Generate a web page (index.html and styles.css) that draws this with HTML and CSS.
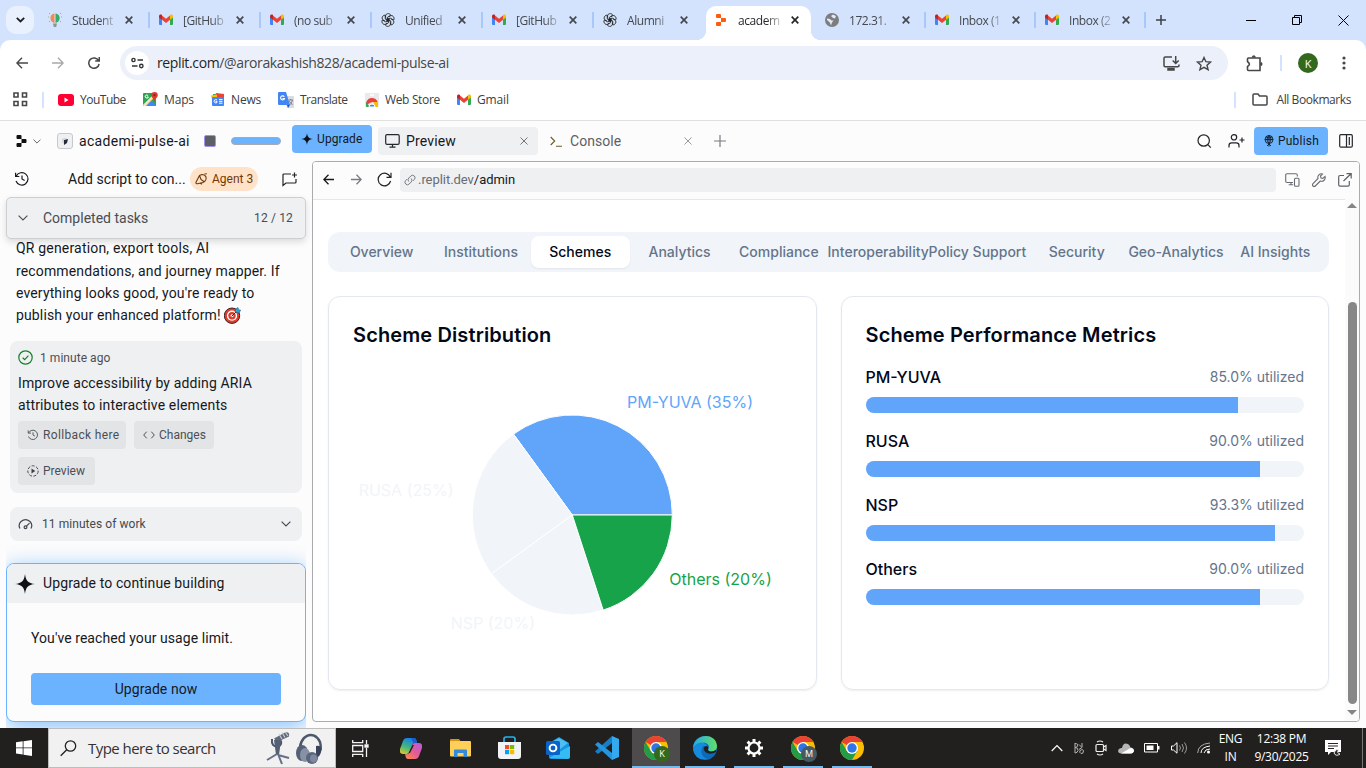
FILE: index.html
```html
<!DOCTYPE html>
<html lang="en">
<head>
<meta charset="utf-8">
<title>academi-pulse-ai - Replit</title>
<link rel="stylesheet" href="styles.css">
</head>
<body>
<svg class="sprite" aria-hidden="true">
  <symbol id="gmail" viewBox="0 0 14 12"><path d="M0 1.8V10a1 1 0 0 0 1 1h2V4.6z" fill="#4285f4"/><path d="M14 1.8V10a1 1 0 0 1-1 1h-2V4.6z" fill="#34a853"/><path d="M3 1.6l4 3.2 4-3.2v4.1L7 8.9 3 5.7z" fill="#ea4335"/><path d="M0 2.2C0 .5 1.8-.1 3 .9v4.8L0 3.5z" fill="#c5221f"/><path d="M14 2.2C14 .5 12.2-.1 11 .9v4.8l3-2.2z" fill="#fbbc04"/></symbol>
  <symbol id="x" viewBox="0 0 8 8"><path d="M.7.7l6.6 6.6M7.3.7L.7 7.3" fill="none" stroke="currentColor" stroke-width="1.7"/></symbol>
  <symbol id="knot" viewBox="0 0 14 14"><g fill="none" stroke="#222" stroke-width=".85"><path id="petal" d="M4.600 4.600V2.900C4.600.4 8.600-.4 9.800 2.200L6.600 4.100v3.700L4.700 6.700"/><use href="#petal" transform="rotate(60 7 7)"/><use href="#petal" transform="rotate(120 7 7)"/><use href="#petal" transform="rotate(180 7 7)"/><use href="#petal" transform="rotate(240 7 7)"/><use href="#petal" transform="rotate(300 7 7)"/></g></symbol>
  <symbol id="replit" viewBox="0 0 10 12"><path d="M0 1q0-1 1-1h3q1 0 1 1v3H1Q0 4 0 3zM5 4h4q1 0 1 1v2q0 1-1 1H5zM0 9q0-1 1-1h4v3q0 1-1 1H1q-1 0-1-1z" fill="currentColor"/></symbol>
  <symbol id="chrome" viewBox="0 0 24 24"><circle cx="12" cy="12" r="12" fill="#fbbc04"/><path d="M12 12L1.6 6A12 12 0 0 1 22.4 6H12z" fill="#ea4335"/><path d="M1.6 6A12 12 0 0 0 12 24l5.200-9L12 12 6.800 15z" fill="#249b46"/><circle cx="12" cy="12" r="6" fill="#fff"/><circle cx="12" cy="12" r="4.700" fill="#2d75e8"/></symbol>
  <symbol id="history" viewBox="0 0 16 16"><path d="M2.200 5.200A6.200 6.200 0 1 1 2 10M1.600 1.800v3.700h3.700M8 4.400V8l2.600 1.500" fill="none" stroke="currentColor" stroke-width="1.200"/></symbol>
  <symbol id="spark" viewBox="0 0 20 20"><path d="M10 0c.8 6.700 3 9.300 10 10-7 .7-9.200 3.300-10 10-.8-6.700-3-9.300-10-10 7-.7 9.200-3.300 10-10z" fill="#0d1014"/></symbol>
  <symbol id="down" viewBox="0 0 10 6"><path d="M.6.6L5 5 9.400.6" fill="none" stroke="currentColor" stroke-width="1.100"/></symbol>
  <symbol id="arrow" viewBox="0 0 12 12"><path d="M12 6H1M6 .8L.9 6 6 11.200" fill="none" stroke="currentColor" stroke-width="1.400"/></symbol>
</svg>

<header class="tabstrip">
  <button class="tab-search"><svg width="9" height="6"><path d="M.8.8l3.700 3.700L8.200.8" fill="none" stroke="#1f1f1f" stroke-width="1.800"/></svg></button>
  <div class="tab first"><svg class="fav" width="14" height="16" viewBox="0 0 14 16"><path d="M6.500 1.500v9.500C1 10 1 2 6.500 1.500z" fill="#f08c5a"/><path d="M7.500 1.500v9.500C13 10 13 2 7.500 1.500z" fill="#3aaa6b"/><path d="M5 11.500h4l-.8 3.500H5.800z" fill="#8b9692"/><path d="M0 5h1M13 5h1M1 10l1-1M13 10l-1-1M1 1l1 1M13 1l-1 1" stroke="#8bbb91"/></svg><span>Student</span><svg class="close"><use href="#x"/></svg></div>
  <div class="tab"><svg class="fav" width="14" height="12"><use href="#gmail"/></svg><span>[GitHub</span><svg class="close"><use href="#x"/></svg></div>
  <div class="tab"><svg class="fav" width="14" height="12"><use href="#gmail"/></svg><span>(no sub</span><svg class="close"><use href="#x"/></svg></div>
  <div class="tab"><svg class="fav" width="14" height="14"><use href="#knot"/></svg><span>Unified</span><svg class="close"><use href="#x"/></svg></div>
  <div class="tab"><svg class="fav" width="14" height="12"><use href="#gmail"/></svg><span>[GitHub</span><svg class="close"><use href="#x"/></svg></div>
  <div class="tab"><svg class="fav" width="14" height="14"><use href="#knot"/></svg><span>Alumni</span><svg class="close"><use href="#x"/></svg></div>
  <div class="tab active"><svg class="fav" width="14" height="12"><use href="#replit"/></svg><span>academ</span><svg class="close"><use href="#x"/></svg></div>
  <div class="tab small after"><svg class="fav" width="14" height="14" viewBox="0 0 14 14"><circle cx="7" cy="7" r="7" fill="#7d7d7d"/><path d="M2 5.500l3 .5 1.500 1.500h2L7 9.500 6 12.500 4.800 9.500 2 7zM6 3l2-1.500 3 1.500-1 2.500L8 5z" fill="#dfe9fb"/></svg><span>172.31.</span><svg class="close"><use href="#x"/></svg></div>
  <div class="tab small"><svg class="fav" width="14" height="12"><use href="#gmail"/></svg><span>Inbox (1</span><svg class="close"><use href="#x"/></svg></div>
  <div class="tab small"><svg class="fav" width="14" height="12"><use href="#gmail"/></svg><span>Inbox (2</span><svg class="close"><use href="#x"/></svg></div>
  <div class="newtab"><svg width="10" height="10"><path d="M5 0v10M0 5h10" stroke="#3c4043" stroke-width="1.500"/></svg></div>
  <div class="winctl">
    <svg width="10" height="10"><path d="M0 5.500h10" stroke="#000"/></svg>
    <svg width="10" height="10"><path d="M.5 2.500h7v7h-7zM2.500 2.500v-2h7v7h-2" fill="none" stroke="#000"/></svg>
    <svg width="11" height="11"><path d="M.5.5l10 10M10.500.5l-10 10" stroke="#000"/></svg>
  </div>
</header>

<div class="chrome">
  <div class="toolbar">
    <div class="nav">
      <svg width="12" height="12" class="dark"><use href="#arrow"/></svg>
      <svg width="12" height="12" class="faded flip"><use href="#arrow"/></svg>
      <svg width="12" height="12" viewBox="0 0 12 12" fill="none" stroke="#474747" stroke-width="1.500"><path d="M10.600 3.700A5.200 5.200 0 1 0 11.100 7M11.300 0v4H7.200"/></svg>
    </div>
    <div class="omnibox">
      <span class="site"><svg width="13" height="12" viewBox="0 0 13 12" fill="none" stroke="#333" stroke-width="1.400"><circle cx="2.500" cy="3" r="1.600"/><path d="M6.500 3H12M1 9h5.500"/><circle cx="10.300" cy="9" r="1.700"/></svg></span>
      <span class="url"><b>replit.com</b>/@arorakashish828/academi-pulse-ai</span>
      <svg class="install" width="17" height="15" viewBox="0 0 17 15" fill="none" stroke="#474747" stroke-width="1.500"><path d="M9 1H2.200Q1 1 1 2.200V9.500q0 1.200 1.200 1.200h12.600q1.200 0 1.200-1.200V8.500M12.700 0v7M9.700 4.500l3 3 3-3"/><path d="M5 12.500h6v1.500H5z" fill="#474747"/></svg>
      <svg width="16" height="15" viewBox="0 0 16 15" fill="none" stroke="#474747" stroke-width="1.400"><path d="M8 1.500l1.900 4.200 4.600.4L11 9.200l1.100 4.500L8 11.300l-4.100 2.400L5 9.200 1.500 6.100l4.600-.4z"/></svg>
    </div>
    <svg class="puzzle" width="17" height="17" viewBox="0 0 17 17" fill="none" stroke="#474747" stroke-width="1.600"><path d="M2.500 3H14v12.500H2.500q-1 0-1-1v-3q3.800-2 0-5V4q0-1 1-1z"/><path d="M6.300 2.500q1.500-3 3 0M14.500 7.500q2.500 1.300 0 3" fill="#474747"/></svg>
    <i class="vsep"></i><span class="avatar">K</span>
    <svg class="kebab" width="4" height="14"><g fill="#474747"><circle cx="2" cy="2" r="1.600"/><circle cx="2" cy="7" r="1.600"/><circle cx="2" cy="12" r="1.600"/></g></svg>
  </div>
  <div class="bookmarks">
    <svg class="apps" width="15" height="15" fill="none" stroke="#474747" stroke-width="1.600"><path d="M1 1h4v4H1zM9.500 1h4v4h-4zM1 9.500h4v4H1zM9.500 9.500h4v4h-4z"/></svg>
    <i class="vsep"></i>
    <a class="b1"><svg width="16" height="12"><rect width="16" height="12" rx="3" fill="#f03"/><path d="M6.500 3.500v5l4-2.500z" fill="#fff"/></svg>YouTube</a>
    <a class="b2"><svg width="15" height="15" viewBox="0 0 15 15"><rect y="1" width="13" height="13" rx="1" fill="#2ea350"/><path d="M2 14L8 8l5 5v1z" fill="#4285f4"/><path d="M0 13L9 4l2 2-8 8H1z" fill="#fdd24c"/><path d="M0 13L12 1l1 1-10.500 12H1z" fill="#e8eaed" opacity=".8"/><path d="M11.500 0a3.300 3.300 0 0 1 3.300 3.300c0 2.500-2.800 3-3.300 6-.5-3-3.300-3.500-3.300-6A3.300 3.300 0 0 1 11.500 0z" fill="#dc3b30"/><circle cx="11.500" cy="3.200" r="1.100" fill="#85251d"/><path d="M5.200 3.700A1.600 1.600 0 1 0 5.400 5H4" fill="none" stroke="#fff"/></svg>Maps</a>
    <a class="b3"><svg width="14" height="13" viewBox="0 0 14 13"><path d="M2 1h5v6H2z" fill="#34a853"/><path d="M5 0l8 1v5H4z" fill="#ea4335"/><path d="M0 2.500l6-1v5H1z" fill="#fbbc04"/><rect x="1" y="4" width="12" height="9" rx="1" fill="#4285f4"/><path d="M6 7A1.700 1.700 0 1 0 6 9.500V8.400H4.500M8 6.500h3.500M8 8.300h3.500M8 10.200h3.500" fill="none" stroke="#fff"/></svg>News</a>
    <a class="b4"><svg width="16" height="16" viewBox="0 0 16 16"><path d="M6 4h9q1 0 1 1v11H9z" fill="#dadce0"/><path d="M9 13l3 0-2 3z" fill="#1a53c4"/><path d="M1 0h7l4 13H1q-1 0-1-1V1q0-1 1-1z" fill="#4285f4"/><path d="M6.300 4.800A2 2 0 1 0 6.500 6.500H4.500" fill="none" stroke="#fff" stroke-width="1.100"/><path d="M10.500 8h4.500M12.700 7v1M14.500 8q-1 4-3 5M11 9l3.500 4" fill="none" stroke="#6b7280" stroke-width=".8"/></svg>Translate</a>
    <a class="b5"><svg width="14" height="14" viewBox="0 0 14 14"><path d="M1 0h12q1 0 1 1v11q0 2-2 2H2q-2 0-2-2V1q0-1 1-1z" fill="#e8eaed"/><path d="M5 2h4" stroke="#fff" stroke-width="1.500"/><path d="M1 12a6 6 0 0 1 12-2L7 9z" fill="#ea4335"/><path d="M1 14V9l4 5z" fill="#34a853"/><path d="M13 14V9H9v5z" fill="#fbbc04"/><path d="M4 14a3 3 0 0 1 6 0z" fill="#4285f4" stroke="#fff"/></svg>Web Store</a>
    <a class="b6"><svg width="14" height="12"><use href="#gmail"/></svg>Gmail</a>
    <div class="allbm"><i class="vsep"></i><svg width="16" height="13" fill="none" stroke="#474747" stroke-width="1.500"><path d="M1 11V2q0-1 1-1h4l1.500 2H14q1 0 1 1v7q0 1-1 1H2q-1 0-1-1z"/></svg><span>All Bookmarks</span></div>
  </div>
</div>

<div class="replitbar">
  <svg class="rlogo" width="11" height="12"><use href="#replit"/></svg>
  <svg class="rdown" width="8" height="5"><use href="#down"/></svg>
  <span class="appicon"><svg width="8" height="8"><path d="M3 3l4-1-1 4-3 2z" fill="#222c38"/><path d="M1 2l2-1h3L3 3v4L1 5z" fill="#d4d7da"/></svg></span>
  <span class="appname">academi-pulse-ai</span>
  <i class="stop"></i><i class="meter"></i>
  <button class="upgrade"><svg width="12" height="12"><use href="#spark"/></svg><span>Upgrade</span></button>
  <div class="rtab current"><svg width="15" height="14" fill="none" stroke="#24272b" stroke-width="1.200"><rect x=".7" y=".7" width="13.500" height="9.600" rx="1.300"/><path d="M7.500 10.500v2.700M4.500 13.200h6"/></svg><span>Preview</span><svg class="rx" width="8" height="8"><path d="M.5.5l7 7M7.500.5l-7 7" stroke="#70757b"/></svg></div>
  <div class="rtab"><svg width="13" height="11" fill="none" stroke="#6b5b27" stroke-width="1.100"><path d="M.7 1l4 4-4 4M6 10.300h6"/></svg><span>Console</span><svg class="rx" width="8" height="8"><path d="M.5.5l7 7M7.500.5l-7 7" stroke="#999"/></svg></div>
  <svg class="rplus" width="12" height="12"><path d="M6 0v12M0 6h12" stroke="#777b80" stroke-width="1.200"/></svg>
  <div class="ractions">
    <svg width="15" height="15" fill="none" stroke="#202327" stroke-width="1.200"><circle cx="6.700" cy="6.500" r="5.700"/><path d="M10.800 10.600l3 3"/></svg>
    <svg class="adduser" width="17" height="14" fill="none" stroke="#202327" stroke-width="1.200"><circle cx="6" cy="3.300" r="2.700"/><path d="M1 13.500v-2q0-2.700 2.700-2.700h4.600q2.700 0 2.700 2.700v2M11.500 6h5M14 3.500v5"/></svg>
    <button class="publish"><svg width="10" height="12" viewBox="0 0 10 12" fill="none" stroke="#111a25" stroke-width=".9"><circle cx="5" cy="4.500" r="4"/><path d="M1 4.500h8M5 .5v11M2 2q3 2 6 0M5 .5Q1 4.500 5 8.500M5 .5q4 4 0 8M3 11l2-2 2 2"/></svg><span>Publish</span></button>
    <svg class="panelicon" width="14" height="14" fill="none" stroke="#24272b" stroke-width="1.200"><rect x=".7" y=".7" width="12.600" height="12.400" rx="1.200"/><path d="M7.500 1v12M10.300 3v8"/></svg>
  </div>
</div>

<main class="workspace">
  <aside class="agent">
    <div class="agent-head"><svg width="16" height="16"><use href="#history"/></svg><span class="thread">Add script to con...</span><span class="badge"><svg width="13" height="12" fill="none" stroke="#6f3708" stroke-width="1.100"><path d="M1 9.200L4.500 2.500l2.300-1q3 0 4.200 2.500.8 2.500-1 4L8 9.500l-5.500 1.200Q.5 10.700 1 9.200zM4.500 2.500l1.500 4 3.500 2.500M9.500 1l2.300-.3M5 10l2 1.300"/></svg><em>Agent 3</em></span><svg class="newchat" width="16" height="15" fill="none" stroke="#202327" stroke-width="1.200"><path d="M9 2H2q-1 0-1 1v10.500L4 11h9q1 0 1-1V7M12.500.5v5M10 3h5"/></svg></div>
    <div class="completed"><svg width="10" height="6"><use href="#down"/></svg><span>Completed tasks</span><b>12 / 12</b></div>
    <div class="message"><p class="m1">QR generation, export tools, AI</p><p>recommendations, and journey mapper. If</p><p>everything looks good, you're ready to</p><p><span>publish your enhanced platform!</span><svg width="17" height="17" viewBox="0 0 17 17"><circle cx="8" cy="8.700" r="7.700" fill="#e33d2b" stroke="#3d2422"/><circle cx="8" cy="8.700" r="5.100" fill="#fff"/><circle cx="8" cy="8.700" r="3.700" fill="#d8392c"/><circle cx="8" cy="8.700" r="1.500" fill="#fff"/><path d="M7.500 9.500l5-5" stroke="#333"/><path d="M11 5l.5-3L14 .5l.7 2.200 2 .5L15 6z" fill="#20a5d8" stroke="#24506b" stroke-width=".5"/></svg></p></div>
    <section class="checkpoint">
      <div class="ago"><svg width="15" height="15" fill="none" stroke="#13802b" stroke-width="1.200"><circle cx="7.500" cy="7.500" r="6.700"/><path d="M4.700 7.700l2 1.900 3.700-3.900"/></svg><span>1 minute ago</span></div>
      <p class="desc l1">Improve accessibility by adding ARIA</p><p class="desc">attributes to interactive elements</p>
      <div class="chips"><button class="rollback"><svg width="12" height="12"><use href="#history"/></svg><span>Rollback here</span></button><button class="changes"><svg width="12" height="8" fill="none" stroke="#4b4f55"><path d="M3.700.7L.7 4l3 3.300M8.300.7l3 3.300-3 3.300"/></svg><span>Changes</span></button><button class="prev"><svg width="12" height="12"><circle cx="6" cy="6" r="5.200" fill="none" stroke="#4b4f55" stroke-dasharray="3 1.500"/><path d="M4.500 3.500v5L8.300 6z" fill="#3d4147"/></svg><span>Preview</span></button></div>
    </section>
    <section class="worked"><svg width="16" height="12" fill="none" stroke="#44484e" stroke-width="1.200"><path d="M2 10.500Q-.2 6.500 3 3.500 7.500-.3 12 3.500 15 6.500 13 10.500M8.500 8.200l3-3"/><circle cx="7.500" cy="9.300" r="1.400"/></svg><span>11 minutes of work</span><svg class="end" width="10" height="6"><use href="#down"/></svg></section>
    <div class="limitwrap"><section class="limit"><h2><svg width="20" height="20"><use href="#spark"/></svg><span>Upgrade to continue building</span></h2><p>You've reached your usage limit.</p><button><span>Upgrade now</span></button></section></div>
  </aside>

  <section class="preview">
    <div class="addr">
      <svg width="11" height="11"><use href="#arrow"/></svg><svg class="flip gray" width="11" height="11"><use href="#arrow"/></svg>
      <svg width="15" height="15" fill="none" stroke="#202327" stroke-width="1.200"><path d="M13.300 5.100A6.300 6.300 0 1 0 13.600 9M14 .8v4.500H9.500"/></svg>
      <div class="field"><svg width="12" height="12" viewBox="0 0 12 12" fill="none" stroke="#777b80"><path d="M4.800 7.500a2.500 2.500 0 0 1 0-3.500l2-2a2.450 2.450 0 0 1 3.500 3.500L9 6.900M7.200 4.500a2.500 2.500 0 0 1 0 3.500l-2 2a2.450 2.450 0 0 1-3.500-3.500L3 5.100"/></svg><span>.replit.dev<b>/admin</b></span></div>
      <svg class="t1" width="15" height="14" fill="none" stroke="#696d72" stroke-width="1.100"><path d="M8 9.500H2q-1.300 0-1.300-1.200V2Q.7.700 2 .7h9q1.300 0 1.300 1.300v1.500M3.700 11.700h4.500M6 9.500v2"/><rect x="9.500" y="5.200" width="4.500" height="8" rx="1"/></svg>
      <svg class="t2" width="14" height="14" viewBox="0 0 14 14" fill="none" stroke="#696d72" stroke-width="1.100"><path d="M10.500 1A3.600 3.600 0 0 0 6 5.500L1 10.700a1.500 1.500 0 0 0 2.300 2.300l5-5A3.600 3.600 0 0 0 13 3.500l-2.200 2L9 5l-.5-2z"/></svg>
      <svg class="t3" width="14" height="14" fill="none" stroke="#5d6166" stroke-width="1.200"><path d="M6 2.500H2q-1.300 0-1.300 1.300v8q0 1.300 1.300 1.300h8q1.300 0 1.300-1.300V8M5.500 8L13 .8M8.500.7h4.700v4.700"/></svg>
    </div>
    <div class="page">
      <div class="content">
        <nav class="pills"><a>Overview</a><a>Institutions</a><a class="on">Schemes</a><a>Analytics</a><a>Compliance</a><a>Interoperability</a><a>Policy Support</a><a>Security</a><a>Geo-Analytics</a><a>AI Insights</a></nav>
        <div class="cards">
          <article class="card"><h3>Scheme Distribution</h3>
            <svg class="pie" width="438" height="300" viewBox="353 365 438 300"><g stroke="#fff"><path d="M572.300 515H672.300A100 100 0 0 0 513.500 434.100z" fill="#60a5fa"/><path d="M572.300 515L513.500 434.100A100 100 0 0 0 491.400 573.800z" fill="#f1f5f9"/><path d="M572.300 515L491.400 573.800A100 100 0 0 0 603.200 610.100z" fill="#f1f5f9"/><path d="M572.300 515L603.200 610.100A100 100 0 0 0 672.300 515z" fill="#16a34a"/></g><g font-size="16"><text x="627" y="408" fill="#60a5fa">PM-YUVA (35%)</text><text x="453.500" y="496" text-anchor="end" fill="#f1f5f9">RUSA (25%)</text><text x="535" y="629" text-anchor="end" fill="#f1f5f9">NSP (20%)</text><text x="669.300" y="585" fill="#16a34a">Others (20%)</text></g></svg>
          </article>
          <article class="card"><h3>Scheme Performance Metrics</h3>
            <div class="metrics">
              <div><p><b>PM-YUVA</b><span>85.0% utilized</span></p><div class="bar"><i style="width:85%"></i></div></div>
              <div><p><b>RUSA</b><span>90.0% utilized</span></p><div class="bar"><i style="width:90%"></i></div></div>
              <div><p><b>NSP</b><span>93.3% utilized</span></p><div class="bar"><i style="width:93.3%"></i></div></div>
              <div><p><b>Others</b><span>90.0% utilized</span></p><div class="bar"><i style="width:90%"></i></div></div>
            </div>
          </article>
        </div>
      </div>
      <div class="scroll"><i class="up"></i><i class="thumb"></i><i class="dn"></i></div>
    </div>
  </section>
</main>

<footer class="taskbar">
  <div class="start"><svg width="16" height="16"><path d="M0 2.300L6.700 1.300V7.500H0zM7.500 1.200L16 0v7.500H7.500zM0 8.300h6.700v6.300L0 13.600zM7.500 8.300H16V16l-8.500-1.200z" fill="#fff"/></svg></div>
  <div class="search"><svg width="17" height="17" fill="none" stroke="#222" stroke-width="1.300"><circle cx="10.500" cy="6" r="5.200"/><path d="M6.700 9.700L.7 15.800"/></svg><span>Type here to search</span>
    <svg class="mic" width="60" height="36" viewBox="0 0 60 36"><path d="M9 8.500L20 2.500q5-1 4 4L12 12z" fill="#626978"/><path d="M14 4l3 5M17 2.500l3 5M20 2l3 4" stroke="#c7ccd4" stroke-width="1.200"/><path d="M7 9q-1 8 6 7.500 4-1 3-6" fill="none" stroke="#4b5569" stroke-width="2"/><path d="M9 10l7 0-2 15h-3z" fill="#566075"/><path d="M12 24L2 30M13 25l11 3M13 24l4 10" stroke="#667084" stroke-width="2"/><path d="M35 23C33 5 49-1 55 12q2 7-1 11" fill="none" stroke="#4c566d" stroke-width="2.500"/><ellipse cx="37" cy="23" rx="6" ry="8" fill="#536075"/><ellipse cx="40" cy="25" rx="5" ry="7" fill="#8791a5"/><path d="M51 16q6-1 5 5-1 7-5 6z" fill="#39435a"/><ellipse cx="47" cy="28" rx="6" ry="6" fill="#5b667c"/><ellipse cx="48.500" cy="28.500" rx="3.500" ry="4" fill="#7f899d"/></svg></div>
  <div class="app view"><svg width="17" height="17" fill="none" stroke="#f4f4f4" stroke-width="1.300"><path d="M.7 0v2.700h10V0M.7 5.500h10v6H.7zM.7 17v-2.700h10V17M14.500 0v4M14.500 8v9"/><path d="M13 5h3v2h-3z" fill="#fff"/></svg></div>
  <div class="app"><svg width="22" height="21" viewBox="0 0 22 21"><defs><linearGradient id="cop1" x1="0" y1="1" x2=".4" y2="0"><stop stop-color="#f6c62d"/><stop offset=".5" stop-color="#43b978"/><stop offset="1" stop-color="#1687e5"/></linearGradient><linearGradient id="cop2" x1="0" y1="1" x2="1" y2="0"><stop stop-color="#ff8d48"/><stop offset=".5" stop-color="#e45a95"/><stop offset="1" stop-color="#b45be8"/></linearGradient></defs><path d="M7 0h7q2 0 2.500 3L17 5q-4-1-5 2l-2 6q-1 3-3 3H3q-4 0-3-5L3 3Q4 0 7 0z" fill="url(#cop1)"/><path d="M11 0h3q2 0 2.500 3L17.500 6H14z" fill="#205ad0"/><path d="M15 21H8q-2 0-2.500-3L5 16q4 1 5-3l2-6q1-2 3-2h4q4 0 3 5l-3 8q-1 3-4 3z" fill="url(#cop2)"/><path d="M12.500 7h1.500l-4 8H8.500z" fill="#22201f"/></svg></div>
  <div class="app"><svg width="21" height="18" viewBox="0 0 21 18"><path d="M0 1q0-1 1-1h8l2 3H0z" fill="#d99312"/><rect y="2" width="21" height="15.500" rx="1" fill="#fed05a"/><path d="M4 18v-6.500q0-1 1-1h11q1 0 1 1V18h-3.500v-4h-6v4z" fill="#338bd7"/></svg></div>
  <div class="app"><svg width="23" height="24" viewBox="0 0 23 24"><path d="M6 7V3q0-2 2-2h7q2 0 2 2v4" fill="none" stroke="#26b1ed" stroke-width="1.700"/><path d="M0 6h23v14q0 3-3 3H3q-3 0-3-3z" fill="#f1f3f4"/><path d="M7 9h4.200v4.200H7z" fill="#f25022"/><path d="M12 9h4.200v4.200H12z" fill="#7fba00"/><path d="M7 14h4.200v4.200H7z" fill="#00a4ef"/><path d="M12 14h4.200v4.200H12z" fill="#ffb900"/></svg></div>
  <div class="app"><svg width="24" height="22" viewBox="0 0 24 22"><path d="M3 6L13 0l10 6v14q0 2-2 2H5q-2 0-2-2z" fill="#1593e5"/><path d="M6 5l7-4 9 5-9 7z" fill="#4fbdf0"/><path d="M3 21L24 9v11q0 2-2 2z" fill="#35bcf2"/><rect y="4" width="14" height="14" rx="1.500" fill="#0963c8"/><circle cx="7" cy="11" r="3.400" fill="none" stroke="#fff" stroke-width="1.900"/></svg></div>
  <div class="app"><svg width="24" height="24" viewBox="0 0 24 24"><path d="M17 0l7 3v18l-7 3z" fill="#35a9ef"/><path d="M17 0v7L3 18l-3-2.500z" fill="#147fc8"/><path d="M17 24v-7L3 6 0 8.500z" fill="#2595df"/></svg></div>
  <div class="app open focus"><svg width="24" height="24"><use href="#chrome"/></svg><em class="pk">K</em></div>
  <div class="app open"><svg width="24" height="24" viewBox="0 0 24 24"><defs><linearGradient id="edge"><stop stop-color="#24a9e8"/><stop offset="1" stop-color="#63df63"/></linearGradient></defs><circle cx="12" cy="12" r="12" fill="#0d69ba"/><path d="M0 12C1-3 23-4 24 10c0 6-7 7-9 4 3-4-1-8-6-7-5 0-9 5-9 5z" fill="url(#edge)"/><path d="M10 10q-5 10 5 13Q2 25 0 13q4-8 11-6 3 1 3 4z" fill="#168bdb"/><path d="M11 11q3-2 4 0l0 3q2 3 8 0v2q-5 3-9 1-4-2-3-6z" fill="#22201f"/></svg></div>
  <div class="app open"><svg width="18" height="18" viewBox="0 0 18 18"><circle cx="9" cy="9" r="5.500" fill="none" stroke="#fff" stroke-width="2.200"/><g stroke="#fff" stroke-width="3"><path d="M9 0v3M9 15v3M0 9h3M15 9h3M2.600 2.600l2.100 2.100M13.300 13.300l2.100 2.100M2.600 15.400l2.100-2.100M13.300 4.700l2.100-2.100"/></g></svg></div>
  <div class="app open"><svg width="24" height="24"><use href="#chrome"/></svg><em class="pm">M</em></div>
  <div class="app open"><svg width="24" height="24"><use href="#chrome"/></svg></div>
  <div class="tray">
    <svg width="12" height="8"><path d="M.7 7L6 1.500 11.300 7" fill="none" stroke="#fff" stroke-width="1.200"/></svg>
    <svg width="11" height="12" fill="none" stroke="#b5b4b3" stroke-width="1"><path d="M1 1v10M1 1.500q3.500 0 2.500 2.500Q3 5.500 1 5.500q3.500 0 3 3-.5 2.500-3 2.500M5 2.500l3 3-3 2M8 1v4M6 8.500q3-2 3.500.5 0 3-2.500 2.500-2-1-1-3"/></svg>
    <svg width="12" height="16" fill="none" stroke="#eee" stroke-width="1.200"><rect x="1" y="4.500" width="7.500" height="7" rx="1"/><path d="M8.500 7l2.500-1.500v5L8.500 9M2 2q3-2 6 0M2 14q3 2 6 0"/></svg>
    <svg width="16" height="11"><path d="M3 10.500Q-1 10 .5 6.500 2 4.500 4 5 5-1 10 1q2 1 2.500 3.500 4 .5 3.300 4-.8 2-2.800 2z" fill="#b5b5b5"/><path d="M3 10.500L12.500 5q4 .5 3.300 3.500-.8 2-2.800 2z" fill="#fff"/></svg>
    <svg width="16" height="10"><path d="M.5.5h13v8.500H.5z" fill="none" stroke="#fff"/><path d="M2.500 2.500h7v4.500h-7zM14 3h1.500v3.500H14z" fill="#fff"/></svg>
    <svg width="16" height="12" fill="none" stroke="#fff"><path d="M.5 4h2L6 .7v10.500L2.500 8h-2z"/><path d="M8.500 3.500q2 2.500 0 5M11 2q3 4 0 8M13.500.5q4 5.500 0 11" stroke="#999"/></svg>
    <svg width="14" height="12" fill="none"><path d="M.7 11Q1 2 13 1" stroke="#aaa"/><path d="M4 11q0-6 9-7M7 11q1-4 6-4" stroke="#fff"/><circle cx="11.500" cy="10" r="1.500" fill="#fff"/></svg>
  </div>
  <div class="lang">ENG<br>IN</div><div class="clock">12:38 PM<br>9/30/2025</div>
  <svg class="notice" width="17" height="17"><path d="M0 0h16v12H6L3 15v-3H0z" fill="#fff"/><path d="M3 3.500h10M3 6h10M3 8.500h6" stroke="#282725"/><path d="M14 9q-3 4 1 5-4 3-6-1 1-4 5-4" fill="#282725" stroke="#fff" stroke-width=".9"/></svg><i class="desk"></i>
</footer>
</body>
</html>
```
FILE: styles.css
```css
*{box-sizing:border-box}
body{margin:0;width:1366px;height:768px;overflow:hidden;display:flex;flex-direction:column;background:#fcfcfc;font-family:Roboto,"Liberation Sans",sans-serif;color:#16181c}
p,h2,h3{margin:0;font-weight:400}
button{border:0;padding:0;font:inherit;color:inherit;display:flex;align-items:center}
svg{display:block;flex:none}
i,em{font-style:normal;flex:none}
span,a,em,button,b{white-space:nowrap}
.sprite{width:0;height:0;position:absolute}
.tabstrip,.toolbar,.bookmarks,.taskbar{font-family:"Open Sans","Noto Sans",sans-serif;font-size:12px}

/* Browser tabs */
.tabstrip{height:40px;background:#d3e3fd;display:flex;color:#45484d;flex:none}
.tab-search{width:28px;height:28px;margin:6px 3px 0 6px;border-radius:10px;background:#e9f1fe;justify-content:center}
.tab{width:111px;height:40px;display:flex;align-items:center;padding-left:9px;border-left:2px solid transparent;border-image:linear-gradient(transparent 12px,#a8c7fa 12px,#a8c7fa 28px,transparent 28px) 0 0 0 2;letter-spacing:-.45px}
.tab.small{width:110px}
.tab.first,.tab.after{border-image:none;border-left-color:transparent}
.tab .fav{width:14px}
.tab span{width:43px;margin-left:10px;-webkit-mask:linear-gradient(90deg,#000 65%,#0003);mask:linear-gradient(90deg,#000 65%,#0003)}
.close{width:8px;height:8px;margin-left:10px}
.tab.active{width:105px;height:34px;margin:6px 3px 0;padding:0 0 6px 8px;border:0;background:#fff;border-radius:10px 10px 0 0;position:relative;color:#26282b}
.tab.active::before,.tab.active::after{content:"";position:absolute;bottom:0;width:10px;height:10px}
.tab.active::before{left:-10px;background:radial-gradient(circle at 0 0,transparent 10px,#fff 10.5px)}
.tab.active::after{right:-10px;background:radial-gradient(circle at 100% 0,transparent 10px,#fff 10.5px)}
.tab.active .fav{color:#ff5b0a}
.newtab{display:flex;align-items:center;width:60px;padding-left:10px;border-left:2px solid transparent;border-image:linear-gradient(transparent 12px,#a8c7fa 12px,#a8c7fa 28px,transparent 28px) 0 0 0 2}
.winctl{display:flex;align-items:center;gap:36px;margin-left:42px}

/* Toolbar and bookmarks */
.chrome{height:81px;background:linear-gradient(#d3e3fd 12px,#fff 12px);border-bottom:1px solid #dfe0e2;flex:none}
.toolbar{height:46px;display:flex;align-items:center;background:#fff;border-radius:10px 10px 0 0}
.nav{display:flex;gap:24px;padding-left:16px;width:120px}
.dark{color:#474747}.faded{color:#a9a9a9}.flip{transform:scaleX(-1)}
.omnibox{width:1108px;height:34px;border-radius:17px;background:#ecf0fa;display:flex;align-items:center;padding:0 16px 0 5px}
.site{width:24px;height:24px;border-radius:50%;background:#fff;display:grid;place-items:center}
.url{font-size:14px;margin-left:8px;flex:1;color:#474747;letter-spacing:-.37px;padding-bottom:1px}
.url b{font-weight:400;color:#1f1f1f}
.install{margin-right:16px}
.puzzle{margin-left:18px}
.vsep{width:2px;height:16px;background:#d3e3fd}
.toolbar .vsep{margin-left:17px}
.avatar{width:20px;height:20px;border-radius:50%;background:#33691e;color:#fff;display:grid;place-items:center;font-size:11px;margin-left:16px}
.kebab{margin-left:24px}
.bookmarks{height:28px;display:flex;align-items:center;padding-left:13px;padding-bottom:1px;color:#3c4043}
.bookmarks .vsep{margin-left:14px}
.bookmarks a{display:flex;align-items:center;gap:6px;letter-spacing:-.15px}
.bookmarks .b1{width:85px;margin-left:14px;letter-spacing:-.5px}.b2{width:68px}.b3{width:67px}.b4{width:87px}.bookmarks .b4{letter-spacing:-.5px}.b5{width:92px}.bookmarks .b5{letter-spacing:-.35px}
.allbm{display:flex;align-items:center;margin-left:auto;margin-right:15px;letter-spacing:-.42px}
.allbm svg{margin:0 8px 0 16px}

/* Workspace header */
.replitbar{height:40px;display:flex;align-items:center;padding-left:16px;flex:none;font-size:14px}
.rlogo{color:#111}.rdown{margin-left:6px;color:#555}
.appicon{width:16px;height:16px;border:1px solid #c8c9cc;border-radius:3px;display:grid;place-items:center;background:#eff0f2;margin-left:16px}
.appname{margin-left:6px;width:125px;letter-spacing:.3px}
.stop{width:12px;height:12px;background:#5c5f66;border:1px solid #a391ed;border-radius:2px}
.meter{width:50px;height:8px;border-radius:4px;background:#6bb3ff;border:1px solid #a6abb1;margin-left:15px}
.upgrade{width:80px;height:28px;border-radius:4px;background:#6bb3ff;margin:-4px 6px 0 11px;padding-left:9px;gap:4px;font-size:12px;letter-spacing:.1px}
.rtab{width:164px;height:28px;display:flex;align-items:center;border-radius:4px;color:#5c6066;padding-left:12px;letter-spacing:.05px}
.rtab span{margin-left:7px}
.rtab.current{width:160px;background:#eff0f2;color:#16181c;padding-left:7px;letter-spacing:.15px}
.rtab.current span{margin-left:6px}
.rtab .rx{margin-left:auto;margin-right:10px}
.rplus{margin-left:12px}
.ractions{margin-left:auto;display:flex;align-items:center;margin-right:13px}
.adduser{margin-left:16px}
.publish{width:74px;height:28px;border-radius:4px;background:#6bb3ff;margin:0 11px 0 9px;padding-left:10px;gap:4px;font-size:12px;letter-spacing:.2px}

/* Agent sidebar */
.workspace{height:567px;display:flex;flex:none}
.agent{width:312px;height:567px;overflow:hidden;font-size:14px}
.agent-head{height:36px;display:flex;align-items:center;padding-left:14px}
.thread{margin-left:38px;width:122px;letter-spacing:.03px}
.badge{width:68px;height:24px;background:#ffe2c8;border-radius:12px;display:flex;align-items:center;padding-left:5px;gap:4px;color:#713906;font-size:12px}
.newchat{margin-left:24px}
.completed{width:300px;height:42px;margin-left:6px;background:#eff0f2;border:1px solid #ccced1;border-radius:5px;display:flex;align-items:center;padding:0 12px 0 11px;color:#494d53;position:relative;box-shadow:0 3px 7px #0002}
.completed span{margin-left:15px}
.completed b{margin-left:auto;font-weight:400;font-size:12px;letter-spacing:.15px}
.message{padding:0 0 0 16px;line-height:22px;margin-top:-2px;letter-spacing:.14px}
.message p{display:flex;white-space:pre;height:22px}
.message .m1{height:23px;letter-spacing:.18px}
.message svg{margin:3px 0 0 3px}
.checkpoint{width:292px;height:152px;margin:15px 0 0 10px;border-radius:8px;background:#eff0f2;padding:9px 8px}
.ago{display:flex;gap:7px;align-items:center;font-size:12px;height:15px;color:#4b4f55;letter-spacing:.05px}
.desc{line-height:22px;letter-spacing:.14px}.desc.l1{margin-top:7px}
.chips{display:flex;flex-wrap:wrap;gap:8px;margin-top:5px;font-size:12px;color:#4b4f55;letter-spacing:.2px}
.chips button{height:28px;background:#e3e4e6;border-radius:4px;padding-left:9px;gap:4px}
.rollback{width:108px;letter-spacing:.35px}.changes{width:80px}.prev{width:77px}
.worked{width:292px;height:34px;margin:14px 0 0 10px;border-radius:8px;background:#eff0f2;display:flex;align-items:center;padding:0 11px 0 8px;font-size:12px;color:#44484e;letter-spacing:.06px}
.worked span{margin-left:8px}.end{margin-left:auto}
.limitwrap{width:300px;height:187px;margin-left:6px;padding-top:22px;overflow:hidden}
.limit{height:159px;border:1px solid #6bb3ff;border-radius:8px;background:#fcfcfc;overflow:hidden;box-shadow:0 5px 22px #6bb3ffd0}
.limit h2{height:39px;background:#eff0f2;font-size:14px;display:flex;align-items:center;padding-left:8px;gap:8px;letter-spacing:.12px}
.limit h2 span{padding-bottom:1px}
.limit p{padding:26px 0 0 24px;line-height:18px;letter-spacing:.07px}
.limit button{width:250px;height:32px;background:#6bb3ff;border-radius:4px;justify-content:center;margin:26px 0 0 24px;letter-spacing:.07px}

/* Embedded preview */
.preview{width:1048px;height:561px;border:1px solid #a9abad;border-radius:4px;overflow:hidden;font-family:Inter,sans-serif;background:#fff}
.addr{height:37px;background:#fcfcfc;display:flex;align-items:center;padding-left:10px;padding-bottom:2px}
.addr>.gray{margin:0 15px 0 17px;color:#777b80}
.field{width:876px;height:24px;background:#eff0f2;border-radius:4px;margin-left:8px;padding-left:4px;display:flex;align-items:center;gap:2px;font:13px Roboto,sans-serif;color:#686c72;letter-spacing:-.05px}
.field span{padding-bottom:1px}
.field b{font-weight:400;color:#16181c}
.t1{margin-left:9px}.t2{margin-left:12px}.t3{margin-left:12px}
.page{height:522px;display:flex}
.content{width:1032px;border-top:1px solid #e2e8f0;padding:32px 16px 0 15px}
.pills{width:1001px;height:40px;background:#f1f5f9;border-radius:12px;padding:4px;display:grid;grid-template-columns:repeat(10,minmax(0,1fr))}
.pills a{font-size:14px;font-weight:500;color:#64748b;display:flex;align-items:center;justify-content:center;border-radius:8px;padding-bottom:1px}
.pills .on{color:#020817;background:#fff;box-shadow:0 1px 2px #0001}
.cards{display:grid;grid-template-columns:1fr 1fr;gap:24px;margin-top:24px}
.card{height:394px;border:1px solid #e2e8f0;border-radius:12px;padding:24px;box-shadow:0 1px 2px #0001}
.card h3{font-size:20px;line-height:28px;font-weight:600;color:#020817;letter-spacing:.12px}
.pie{margin-top:16px}
.metrics{display:grid;gap:16px;margin-top:16px}
.metrics p{display:flex;justify-content:space-between;height:24px;line-height:24px;margin-bottom:8px;color:#64748b;font-size:14px}
.metrics b{font-weight:500;color:#020817;font-size:16px}
.bar{height:16px;border-radius:8px;background:#f1f5f9;overflow:hidden}
.bar i{display:block;height:16px;background:#60a5fa}
.scroll{width:14px;background:#fbfbfb;display:flex;flex-direction:column;align-items:center}
.up,.dn{border:5px solid transparent}
.up{border-top:0;border-bottom-color:#858585;margin-top:4px}
.thumb{width:9px;height:402px;border-radius:5px;background:#878787;margin-top:94px}
.dn{border-bottom:0;border-top-color:#858585;margin-top:6px}

/* Desktop taskbar */
.taskbar{height:40px;background:#22201f;display:flex;color:#fff;flex:none}
.start{width:48px;display:grid;place-items:center}
.search{width:288px;background:#f1f1f1;border:1px solid #bdbdbd;display:flex;align-items:center;padding-left:11px;color:#333;font-size:15px}
.search span{margin-left:11px;width:177px;letter-spacing:-.54px}
.app{width:49px;display:grid;place-items:center;position:relative;padding-right:1px}
.app.view{margin-right:2px}
.open{background:linear-gradient(#76b9ed,#76b9ed) 4px 38px/40px 2px no-repeat}
.focus{background:linear-gradient(#76b9ed,#76b9ed) 0 38px/48px 2px no-repeat,linear-gradient(#4d4b4b,#4d4b4b) 0 0/48px 40px no-repeat}
.app em{position:absolute;left:22px;top:18px;width:16px;height:16px;border-radius:50%;background:#33691e;font-size:9px;line-height:16px;text-align:center}
.app .pm{background:#455a64}
.tray{width:160px;display:flex;align-items:center;justify-content:space-between;margin-left:174px}
.lang,.clock{line-height:18px;text-align:center;padding-top:2px;letter-spacing:-.3px}
.lang{width:39px}.clock{width:63px}
.notice{margin:12px 0 0 12px}
.desk{width:1px;background:#777;margin-left:20px}
```
